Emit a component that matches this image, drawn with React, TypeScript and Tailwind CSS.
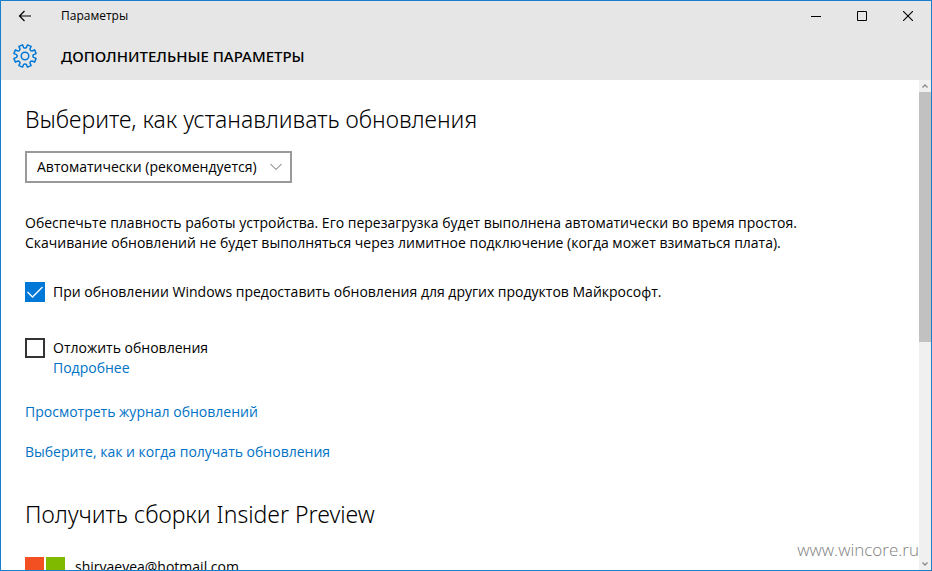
import { useState } from "react";

// Settings cog, eight teeth
function GearIcon() {
  return (
    <svg width="26" height="26" viewBox="-13 -13 26 26" fill="none" stroke="#0078d7" strokeWidth="1.5" strokeLinejoin="round">
      <circle r="3.8" />
      <path d="M1.4 -8.5 L2.4 -11.1 L6.1 -9.6 L5 -7 A1.9 1.9 0 0 0 7 -5 L9.6 -6.1 L11.1 -2.4 L8.5 -1.4 A1.9 1.9 0 0 0 8.5 1.4 L11.1 2.4 L9.6 6.1 L7 5 A1.9 1.9 0 0 0 5 7 L6.1 9.6 L2.4 11.1 L1.4 8.5 A1.9 1.9 0 0 0 -1.4 8.5 L-2.4 11.1 L-6.1 9.6 L-5 7 A1.9 1.9 0 0 0 -7 5 L-9.6 6.1 L-11.1 2.4 L-8.5 1.4 A1.9 1.9 0 0 0 -8.5 -1.4 L-11.1 -2.4 L-9.6 -6.1 L-7 -5 A1.9 1.9 0 0 0 -5 -7 L-6.1 -9.6 L-2.4 -11.1 L-1.4 -8.5 A1.9 1.9 0 0 0 1.4 -8.5 Z" />
    </svg>
  );
}

function CheckBox({ label, checked, onChange }: { label: string; checked: boolean; onChange: (v: boolean) => void }) {
  return (
    <label className="flex w-fit items-center gap-2">
      <span className="grid size-5 shrink-0">
        <input
          type="checkbox"
          checked={checked}
          onChange={(e) => onChange(e.target.checked)}
          className="peer col-start-1 row-start-1 size-5 appearance-none border-2 border-[#333333] checked:border-[#0078d7] checked:bg-[#0078d7]"
        />
        <svg
          viewBox="0 0 20 20"
          fill="none"
          stroke="#ffffff"
          strokeWidth="1.3"
          className="pointer-events-none invisible col-start-1 row-start-1 size-5 peer-checked:visible"
        >
          <path d="M2.5 10 L7.5 15 L17.5 5" />
        </svg>
      </span>
      {label}
    </label>
  );
}

export default function App() {
  const [otherProducts, setOtherProducts] = useState(true);
  const [defer, setDefer] = useState(false);

  return (
    <div className="flex h-screen flex-col overflow-hidden border border-[#1a7fca] bg-white font-['Open_Sans','Noto_Sans',sans-serif] text-sm leading-5 text-black">
      <header className="shrink-0 bg-[#e6e6e6]">
        <div className="flex h-[30px] items-center">
          <button aria-label="Назад" className="flex h-full w-12 items-center justify-center">
            <svg width="14" height="12" viewBox="0 0 14 12" fill="none" stroke="#000000" strokeWidth="1.2">
              <path d="M13 6 H1.5 M6.5 1 L1.5 6 L6.5 11" />
            </svg>
          </button>
          <span className="ml-3 flex-1 text-xs">Параметры</span>
          <button aria-label="Свернуть" className="flex h-full w-[46px] items-center justify-center">
            <svg width="10" height="10" viewBox="0 0 10 10" fill="none" stroke="#000000">
              <path d="M0 5.5 H10" />
            </svg>
          </button>
          <button aria-label="Развернуть" className="flex h-full w-[46px] items-center justify-center">
            <svg width="10" height="10" viewBox="0 0 10 10" fill="none" stroke="#000000">
              <path d="M0.5 0.5 H9.5 V9.5 H0.5 Z" />
            </svg>
          </button>
          <button aria-label="Закрыть" className="flex h-full w-[46px] items-center justify-center">
            <svg width="10" height="10" viewBox="0 0 10 10" fill="none" stroke="#000000" strokeWidth="1.1">
              <path d="M0 0 L10 10 M10 0 L0 10" />
            </svg>
          </button>
        </div>
        <div className="flex h-[49px] items-center">
          <span className="flex w-12 justify-center">
            <GearIcon />
          </span>
          <h1 className="ml-3 font-['Noto_Sans',sans-serif] text-[15px] font-medium">ДОПОЛНИТЕЛЬНЫЕ ПАРАМЕТРЫ</h1>
        </div>
      </header>

      <div className="relative flex min-h-0 flex-1">
        <main className="min-w-0 flex-1 overflow-hidden px-6 pt-[23px]">
          <h2 className="font-['Noto_Sans',sans-serif] text-[23px] leading-8 font-light">Выберите, как устанавливать обновления</h2>

          <div className="mt-4 grid w-fit items-center">
            <select
              aria-label="Способ установки обновлений"
              className="col-start-1 row-start-1 h-8 w-[267px] appearance-none border-2 border-[#999999] bg-white pr-8 pl-2.5"
            >
              <option>Автоматически (рекомендуется)</option>
              <option>Уведомлять о планировании перезагрузки</option>
            </select>
            <svg
              width="12"
              height="8"
              viewBox="0 0 12 8"
              fill="none"
              stroke="#666666"
              className="pointer-events-none col-start-1 row-start-1 mr-2.5 justify-self-end"
            >
              <path d="M0.5 1 L6 6.5 L11.5 1" />
            </svg>
          </div>

          <p className="mt-[30px]">
            Обеспечьте плавность работы устройства. Его перезагрузка будет выполнена автоматически во время простоя.
            <br />
            Скачивание обновлений не будет выполняться через лимитное подключение (когда может взиматься плата).
          </p>

          <div className="mt-[29px]">
            <CheckBox
              label="При обновлении Windows предоставить обновления для других продуктов Майкрософт."
              checked={otherProducts}
              onChange={setOtherProducts}
            />
          </div>
          <div className="mt-9">
            <CheckBox label="Отложить обновления" checked={defer} onChange={setDefer} />
            <a href="#more" className="ml-7 block w-fit text-[#0072c6]">
              Подробнее
            </a>
          </div>

          <a href="#history" className="mt-6 block w-fit text-[#0072c6]">
            Просмотреть журнал обновлений
          </a>
          <a href="#delivery" className="mt-5 block w-fit text-[#0072c6]">
            Выберите, как и когда получать обновления
          </a>

          <h2 className="mt-9 font-['Noto_Sans',sans-serif] text-[23px] leading-8 font-light">Получить сборки Insider Preview</h2>
          <div className="mt-[27px] flex gap-2.5">
            <svg width="40" height="40" viewBox="0 0 40 40">
              <rect width="19" height="19" fill="#f25022" />
              <rect x="21" width="19" height="19" fill="#7fba00" />
              <rect y="21" width="19" height="19" fill="#00a4ef" />
              <rect x="21" y="21" width="19" height="19" fill="#ffb900" />
            </svg>
            <span>shiryaevea@hotmail.com</span>
          </div>
        </main>

        <div className="flex w-3 shrink-0 flex-col bg-[#f0f0f0]">
          <button aria-label="Прокрутить вверх" className="flex h-3 items-center justify-center">
            <svg width="6" height="4" viewBox="0 0 6 4" fill="none" stroke="#888888" strokeWidth="1.3">
              <path d="M0.5 3.5 L3 1 L5.5 3.5" />
            </svg>
          </button>
          <div className="flex-15 bg-[#c1c1c1]" />
          <div className="flex-13" />
          <button aria-label="Прокрутить вниз" className="flex h-3 items-center justify-center">
            <svg width="6" height="4" viewBox="0 0 6 4" fill="none" stroke="#888888" strokeWidth="1.3">
              <path d="M0.5 0.5 L3 3 L5.5 0.5" />
            </svg>
          </button>
        </div>

        <span className="absolute right-3 bottom-2 text-[17px] leading-6 font-light text-[#808080]">www.wincore.ru</span>
      </div>
    </div>
  );
}
